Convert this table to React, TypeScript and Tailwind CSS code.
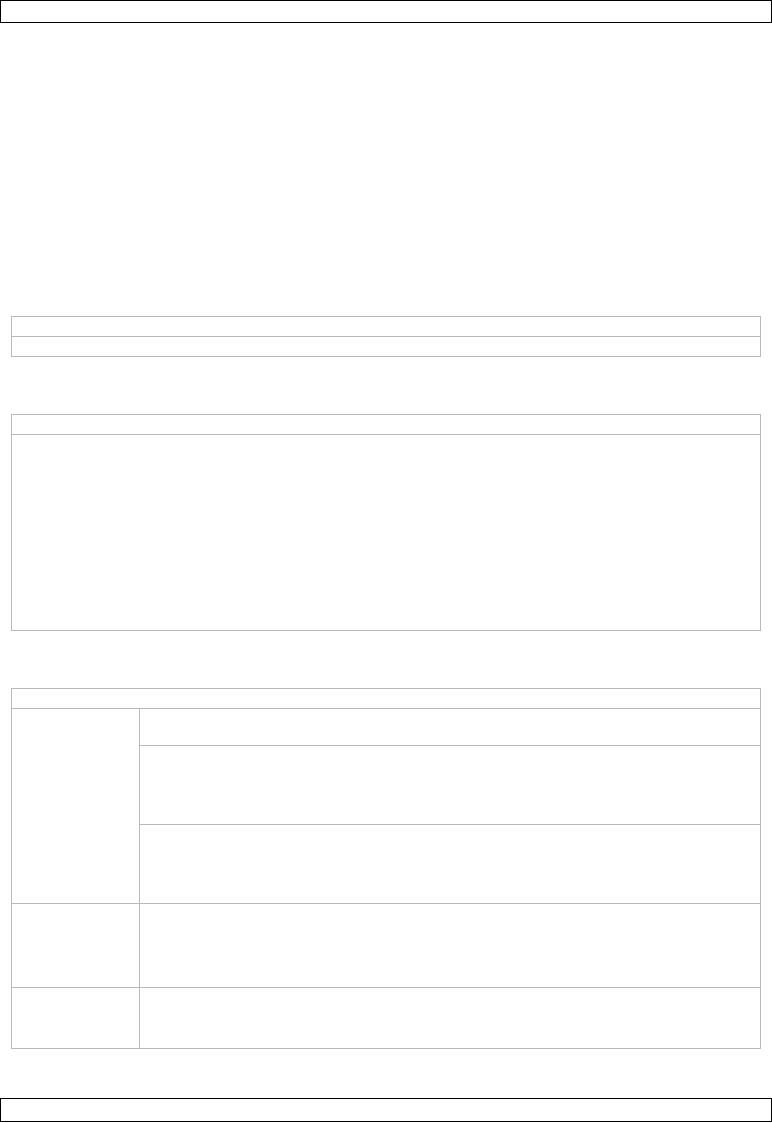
export default function App() {
  const b = "border-[#bababa]";
  return (
    <div className="flex flex-col bg-white w-full min-h-[1123px]" style={{ fontFamily: '"Liberation Sans", Arial, sans-serif' }}>
      <div className="h-[23px] border border-black" />

      <div className={`mx-[11px] mt-[293px] border ${b} flex flex-col`}>
        <div className={`h-[20px] border-b ${b}`} />
        <div className="h-[19px]" />
      </div>

      <div className={`mx-[11px] mt-[57px] border ${b} flex flex-col`}>
        <div className={`h-[20px] border-b ${b}`} />
        <div className="h-[195px]" />
      </div>

      <div className={`mx-[11px] mt-[57px] border ${b} flex flex-col`}>
        <div className={`h-[20px] border-b ${b}`} />
        <div className="flex">
          <div className={`w-[128px] border-r ${b}`} />
          <div className="flex-1 flex flex-col">
            <div className={`h-[37px] border-b ${b}`} />
            <div className={`h-[79px] border-b ${b}`} />
            <div className="h-[78px]" />
          </div>
        </div>
        <div className={`flex border-t ${b}`}>
          <div className={`w-[128px] border-r ${b}`} />
          <div className="flex-1 h-[83px]" />
        </div>
        <div className={`flex border-t ${b}`}>
          <div className={`w-[128px] border-r ${b}`} />
          <div className="flex-1 h-[60px]" />
        </div>
      </div>

      <div className="mt-[49px] h-[24px] border border-black" />
    </div>
  );
}
